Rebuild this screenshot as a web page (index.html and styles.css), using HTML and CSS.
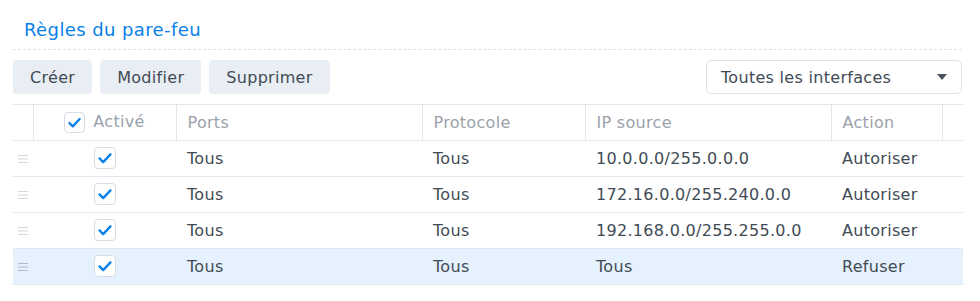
FILE: index.html
```html
<!DOCTYPE html>
<html lang="fr">
<head>
  <meta charset="UTF-8" />
  <title>Règles du pare-feu</title>
  <link rel="stylesheet" href="styles.css">
</head>
<body>
  <div class="panel">
    <h2 class="title">Règles du pare-feu</h2>
    <div class="toolbar">
      <button class="tb-btn">Créer</button>
      <button class="tb-btn">Modifier</button>
      <button class="tb-btn">Supprimer</button>
      <div class="spacer"></div>
      <div class="select">
        <span>Toutes les interfaces</span>
        <svg class="caret" width="10" height="6" viewBox="0 0 10 6"><path d="M0 0h10L5 6z" fill="#4a535d"/></svg>
      </div>
    </div>
    <table class="grid">
      <colgroup>
        <col style="width:20px"><col style="width:143px"><col style="width:246px"><col style="width:163px"><col style="width:246px"><col style="width:111px"><col>
      </colgroup>
      <thead>
        <tr>
          <th></th>
          <th class="c-en"><span class="chk"><svg viewBox="0 0 22 22"><path d="M5 11.5l4 4 8-8.5" /></svg></span>Activé</th>
          <th>Ports</th>
          <th>Protocole</th>
          <th>IP source</th>
          <th>Action</th>
          <th></th>
        </tr>
      </thead>
      <tbody>
        <tr>
          <td class="handle"><svg width="10" height="8" viewBox="0 0 10 8"><path d="M0 .5h10M0 4h10M0 7.5h10"/></svg></td>
          <td class="c-en"><span class="chk"><svg viewBox="0 0 22 22"><path d="M5 11.5l4 4 8-8.5" /></svg></span></td>
          <td>Tous</td><td>Tous</td><td>10.0.0.0/255.0.0.0</td><td>Autoriser</td><td></td>
        </tr>
        <tr>
          <td class="handle"><svg width="10" height="8" viewBox="0 0 10 8"><path d="M0 .5h10M0 4h10M0 7.5h10"/></svg></td>
          <td class="c-en"><span class="chk"><svg viewBox="0 0 22 22"><path d="M5 11.5l4 4 8-8.5" /></svg></span></td>
          <td>Tous</td><td>Tous</td><td>172.16.0.0/255.240.0.0</td><td>Autoriser</td><td></td>
        </tr>
        <tr>
          <td class="handle"><svg width="10" height="8" viewBox="0 0 10 8"><path d="M0 .5h10M0 4h10M0 7.5h10"/></svg></td>
          <td class="c-en"><span class="chk"><svg viewBox="0 0 22 22"><path d="M5 11.5l4 4 8-8.5" /></svg></span></td>
          <td>Tous</td><td>Tous</td><td>192.168.0.0/255.255.0.0</td><td>Autoriser</td><td></td>
        </tr>
        <tr class="selected">
          <td class="handle"><svg width="10" height="8" viewBox="0 0 10 8"><path d="M0 .5h10M0 4h10M0 7.5h10"/></svg></td>
          <td class="c-en"><span class="chk"><svg viewBox="0 0 22 22"><path d="M5 11.5l4 4 8-8.5" /></svg></span></td>
          <td>Tous</td><td>Tous</td><td>Tous</td><td>Refuser</td><td></td>
        </tr>
      </tbody>
    </table>
  </div>
</body>
</html>
```

FILE: styles.css
```css
:root {
  --blue: #0a80e8;
  --text: #414b55;
  --muted: #9aa2ab;
  --line: #e1e6ec;
  --btn-bg: #e9eef4;
  --sel-bg: #e5f1fc;
}
* { box-sizing: border-box; margin: 0; padding: 0; }
body {
  background: #fff;
  font-family: "DejaVu Sans", Verdana, sans-serif;
  font-size: 16px;
  letter-spacing: 0.3px;
  color: var(--text);
}
.panel { padding: 0 18px 0 13px; }
.title {
  font-size: 18px;
  font-weight: normal;
  letter-spacing: 0.4px;
  color: var(--blue);
  padding: 19px 0 0 11px;
  height: 50px;
  border-bottom: 1px dashed #dde2e8;
}
.toolbar {
  display: flex;
  align-items: center;
  gap: 8px;
  margin-top: 10px;
  height: 34px;
}
.tb-btn {
  height: 34px;
  padding: 0 17px;
  border: none;
  border-radius: 4px;
  background: var(--btn-bg);
  color: var(--text);
  font: inherit;
  letter-spacing: inherit;
}
.spacer { flex: 1; }
.select {
  width: 256px;
  height: 34px;
  border: 1px solid #dce2e9;
  border-radius: 5px;
  display: flex;
  align-items: center;
  justify-content: space-between;
  padding: 0 14px 0 14px;
}
.grid {
  width: 950px;
  margin-top: 10px;
  border-collapse: collapse;
  table-layout: fixed;
}
.grid th, .grid td {
  height: 36px;
  text-align: left;
  padding: 0 11px;
  border-bottom: 1px solid var(--line);
  white-space: nowrap;
}
.grid thead tr { border-top: 1px solid var(--line); }
.grid th {
  font-weight: normal;
  color: var(--muted);
  border-left: 1px solid var(--line);
}
.grid th:first-child { border-left: none; }
.grid .c-en { text-align: center; padding: 0; }
.chk {
  display: inline-block;
  vertical-align: middle;
  width: 22px;
  height: 22px;
  border: 1px solid #d6dde5;
  border-radius: 4px;
  background: #fff;
  margin-top: -1px;
}
th .chk { width: 21px; height: 21px; margin-right: 8px; }
.chk svg { width: 100%; height: 100%; display: block; }
.chk path { fill: none; stroke: var(--blue); stroke-width: 2.6; stroke-linecap: round; stroke-linejoin: round; }
.grid .handle { padding: 0 0 0 5px; }
.handle svg { display: block; }
.handle path { stroke: #d3d8de; stroke-width: 1; }
.selected td { background: var(--sel-bg); }
.selected .handle path { stroke: #b3bac2; }
```
